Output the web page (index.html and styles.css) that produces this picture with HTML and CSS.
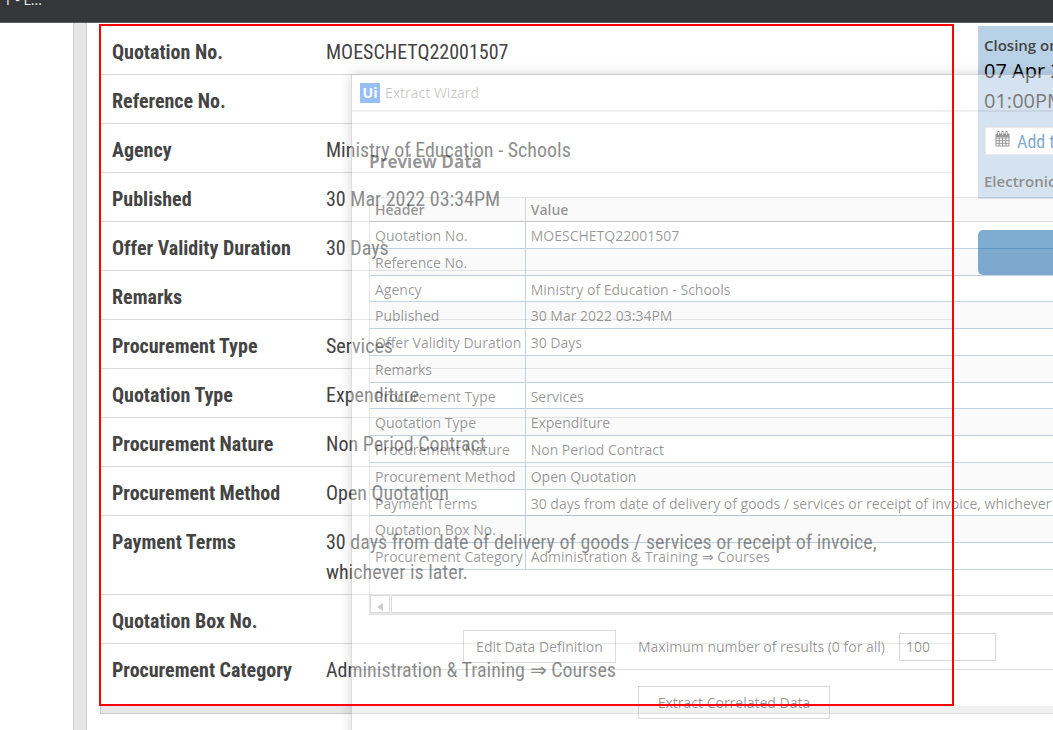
FILE: index.html
```html
<!DOCTYPE html>
<html lang="en">
<head>
<meta charset="utf-8">
<title>Quotation</title>
<link rel="stylesheet" href="styles.css">
</head>
<body>
<header class="topbar"><span class="tab">T - L...</span></header>
<div class="layout">
  <div class="gutter"></div>
  <main class="main">
    <section class="details">
      <dl class="list">
        <div class="row"><dt>Quotation No.</dt><dd>MOESCHETQ22001507</dd></div>
        <div class="row"><dt>Reference No.</dt><dd></dd></div>
        <div class="row"><dt>Agency</dt><dd>Ministry of Education - Schools</dd></div>
        <div class="row"><dt>Published</dt><dd>30 Mar 2022 03:34PM</dd></div>
        <div class="row"><dt>Offer Validity Duration</dt><dd>30 Days</dd></div>
        <div class="row"><dt>Remarks</dt><dd></dd></div>
        <div class="row"><dt>Procurement Type</dt><dd>Services</dd></div>
        <div class="row"><dt>Quotation Type</dt><dd>Expenditure</dd></div>
        <div class="row"><dt>Procurement Nature</dt><dd>Non Period Contract</dd></div>
        <div class="row"><dt>Procurement Method</dt><dd>Open Quotation</dd></div>
        <div class="row"><dt>Payment Terms</dt><dd>30 days from date of delivery of goods / services or receipt of invoice,<br>whichever is later.</dd></div>
        <div class="row"><dt>Quotation Box No.</dt><dd></dd></div>
        <div class="row"><dt>Procurement Category</dt><dd>Administration &amp; Training ⇒ Courses</dd></div>
      </dl>
    </section>
    <aside class="side">
      <div class="closing">
        <p class="small">Closing on</p>
        <p class="big">07 Apr 2022</p>
        <p class="big time">01:00PM</p>
        <button class="add" type="button"><svg width="15" height="16" viewBox="0 0 15 16"><path d="M1 3h13v12H1zM1 7h13M1 9.700h13M1 12.300h13M4.200 6v9M7.500 6v9M10.800 6v9" fill="none" stroke="#555" stroke-width="1"/><path d="M1 3h13v3H1z" fill="#555"/><path d="M3.500 0v4M7.500 0v4M11.500 0v4" stroke="#444" stroke-width="2"/><path d="M3.500 1v3M7.500 1v3M11.500 1v3" stroke="#ddd" stroke-width="1"/></svg>Add to calendar</button>
        <p class="small">Electronic</p>
      </div>
      <button class="respond" type="button" aria-label="Respond"></button>
    </aside>
    <div class="band"></div>
  </main>
</div>

<div class="wizard" role="dialog" aria-label="Extract Wizard">
  <div class="titlebar"><span class="logo">Ui</span><span>Extract Wizard</span></div>
  <div class="body">
    <h2>Preview Data</h2>
    <div class="preview">
      <table>
        <thead><tr><th>Header</th><th>Value</th></tr></thead>
        <tbody>
          <tr><td>Quotation No.</td><td>MOESCHETQ22001507</td></tr>
          <tr><td>Reference No.</td><td></td></tr>
          <tr><td>Agency</td><td>Ministry of Education - Schools</td></tr>
          <tr><td>Published</td><td>30 Mar 2022 03:34PM</td></tr>
          <tr><td>Offer Validity Duration</td><td>30 Days</td></tr>
          <tr><td>Remarks</td><td></td></tr>
          <tr><td>Procurement Type</td><td>Services</td></tr>
          <tr><td>Quotation Type</td><td>Expenditure</td></tr>
          <tr><td>Procurement Nature</td><td>Non Period Contract</td></tr>
          <tr><td>Procurement Method</td><td>Open Quotation</td></tr>
          <tr><td>Payment Terms</td><td>30 days from date of delivery of goods / services or receipt of invoice, whichever is later.</td></tr>
          <tr><td>Quotation Box No.</td><td></td></tr>
          <tr><td>Procurement Category</td><td>Administration &amp; Training ⇒ Courses</td></tr>
        </tbody>
      </table>
      <div class="scroll"><button class="arrow" type="button" aria-label="Scroll left"><svg width="8" height="8" viewBox="0 0 8 8"><path d="M7 0v8L1 4z" fill="#ccc"/></svg></button><div class="track"></div></div>
    </div>
  </div>
  <div class="options">
    <button class="btn edit" type="button">Edit Data Definition</button>
    <label for="max">Maximum number of results (0 for all)</label>
    <input id="max" type="text" value="100">
  </div>
  <div class="footer"><button class="btn correlated" type="button">Extract Correlated Data</button></div>
</div>
</body>
</html>
```
FILE: styles.css
```css
* { box-sizing: border-box; }
body {
  margin: 0;
  min-height: 100vh;
  display: flex;
  flex-direction: column;
  position: relative;
  overflow: hidden;
  background: #fff;
  color: #444;
  font-family: "Roboto Condensed", "Liberation Sans Narrow", Roboto, sans-serif;
}
p, dl, dd, h2 { margin: 0; }
button, input { font: inherit; color: inherit; }
.topbar {
  height: 23px;
  background: #35363a;
  border-bottom: 1px solid #5c5d60;
  overflow: hidden;
}
.tab {
  display: block;
  padding-left: 4px;
  margin-top: -9px;
  color: #eee;
  font: 14px/18px "Open Sans", sans-serif;
}
.layout { flex: 1; display: flex; }
.gutter {
  width: 14px;
  margin-left: 73px;
  background: #e6e6e6;
  border: solid #ccc;
  border-width: 0 1px;
}
.main {
  flex: 1;
  min-width: 0;
  display: grid;
  grid-template-columns: minmax(0, 1fr) 75px;
  grid-template-rows: auto auto 1fr;
  column-gap: 24px;
  padding: 1px 0 0 12px;
}
.details {
  position: relative;
  padding: 2px;
}
.details::after {
  content: "";
  position: absolute;
  inset: 0;
  z-index: 3;
  border: 2px solid #f00;
  pointer-events: none;
}
.row {
  display: grid;
  grid-template-columns: 214px 1fr;
  padding: 11px 11px 7px;
  border-bottom: 1px solid #d8d9d9;
  font-size: 20px;
  line-height: 30px;
}
.row:last-child { border: 0; padding-bottom: 19px; }
.row dt { font-weight: 700; }
.row dd { white-space: nowrap; }
.side { padding-top: 2px; overflow: hidden; white-space: nowrap; }
.closing {
  height: 173px;
  padding: 9px 0 0 6px;
  background: #b9d1e7;
  font-family: "Open Sans", sans-serif;
}
.small { font-size: 15px; line-height: 20px; font-weight: 600; }
.big { font-size: 20px; line-height: 30px; color: #000; }
.small + .big { padding-top: 1px; }
.time { color: #222; }
.add {
  display: flex;
  align-items: center;
  gap: 7px;
  height: 28px;
  margin: 11px 0 16px 1px;
  padding: 0 9px;
  background: #fff;
  border: 1px solid #ddd;
  color: #2a71b1;
  font: 18px "Roboto Condensed", "Liberation Sans Narrow", sans-serif;
}
.add svg { margin-bottom: 4px; }
.respond {
  width: 200px;
  height: 45px;
  margin-top: 31px;
  border: 0;
  border-radius: 5px;
  background: #2a77b5;
}
.band {
  grid-column: 1 / -1;
  height: 8px;
  margin-left: 1px;
  background: #e6e6e6;
  border: solid #ccc;
  border-width: 0 0 1px 1px;
}
.wizard {
  position: absolute;
  z-index: 2;
  top: 74px;
  left: 351px;
  right: -30px;
  bottom: -30px;
  background: rgba(255, 255, 255, .4);
  border: 1px solid rgba(0, 0, 0, .14);
  box-shadow: 0 0 12px rgba(0, 0, 0, .16);
  color: rgba(0, 0, 0, .42);
  font: 14px/20px "Open Sans", sans-serif;
}
.titlebar {
  display: flex;
  gap: 5px;
  height: 37px;
  padding: 8px 8px 7px;
  border-bottom: 2px solid rgba(0, 0, 0, .06);
  color: rgba(0, 0, 0, .22);
}
.logo {
  width: 20px;
  height: 20px;
  background: #97bff1;
  color: #fff;
  font-weight: 700;
  text-align: center;
}
.body { padding: 38px 0 0 17px; }
h2 { font-size: 17px; line-height: 24px; font-weight: 700; }
.preview {
  margin-top: 23px;
  overflow: hidden;
  border: 1px solid rgba(0, 0, 0, .1);
  border-width: 1px 0 2px 1px;
}
table { width: 100%; border-collapse: separate; border-spacing: 0; }
th, td {
  height: 27px;
  padding: 2px 5px 0;
  text-align: left;
  white-space: nowrap;
  border-bottom: 1px solid rgba(20, 85, 145, .26);
}
th:first-child, td:first-child { width: 156px; padding-right: 2px; border-right: 1px solid rgba(20, 85, 145, .26); }
tbody tr:nth-child(4n + 3) td { height: 26px; }
thead th, thead th:first-child { height: 24px; padding-top: 0; font-weight: 600; background: rgba(0, 0, 0, .02); border-color: rgba(0, 0, 0, .13); }
tbody tr:nth-child(even) { background: rgba(0, 0, 0, .02); }
.scroll { display: flex; gap: 1px; height: 18px; margin-top: 25px; }
.arrow {
  width: 20px;
  padding: 0;
  background: none;
  border: 1px solid rgba(0, 0, 0, .14);
}
.track { flex: 1; border: 1px solid rgba(0, 0, 0, .14); }
.options {
  display: flex;
  align-items: center;
  padding: 15px 0 6px 111px;
  border-bottom: 1px solid rgba(0, 0, 0, .12);
}
.btn {
  height: 33px;
  padding: 0;
  background: none;
  border: 1px solid rgba(0, 0, 0, .14);
}
.edit { width: 153px; }
.options label { width: 243px; margin: 0 18px 0 22px; white-space: nowrap; }
.options input {
  width: 97px;
  height: 28px;
  padding: 0 6px;
  background: none;
  border: 1px solid rgba(0, 0, 0, .16);
}
.footer { padding: 16px 0 0 286px; }
.correlated { width: 192px; }
```
